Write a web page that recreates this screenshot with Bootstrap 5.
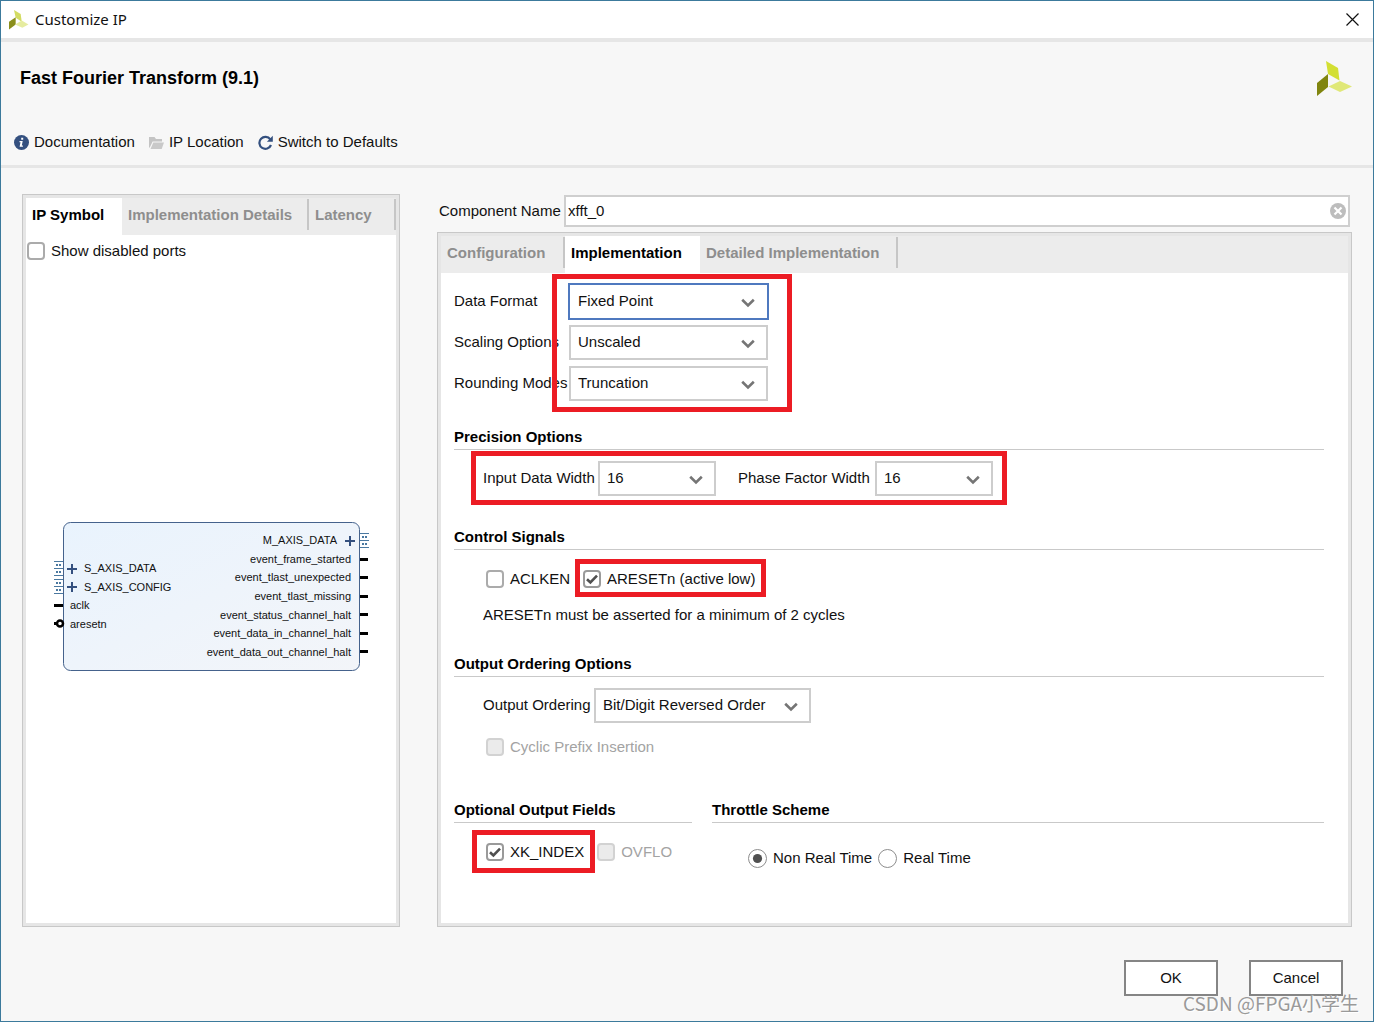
<!DOCTYPE html>
<html lang="en">
<head>
<meta charset="utf-8">
<meta name="viewport" content="width=device-width, initial-scale=1">
<title>Customize IP</title>
<link href="https://cdn.jsdelivr.net/npm/bootstrap@5.3.0/dist/css/bootstrap.min.css" rel="stylesheet">
<style>
:root{--edge:#c8c8c8;--rim:#e6e6e6;--strip:#ececec}
body{font-family:"Liberation Sans",Arial,sans-serif;font-size:15px;line-height:20px;color:#111;background:#f7f7f7}
.dialog-window{min-height:100vh;border:1px solid #3c7a9c}
.title-bar{height:41px;padding:0 14px 0 8px;gap:6px;border-bottom:4px solid var(--rim);font-family:"Noto Sans","Open Sans",sans-serif}
.title-bar span{padding-bottom:2px}
.close-btn{line-height:0}
.dialog-head{padding:19px 21px 13px 13px;border-bottom:3px solid var(--rim)}
.ip-title{font-size:18px;font-weight:700;line-height:24px;padding:0 0 2px 6px;color:#000}
.tool-row{margin-top:36px;gap:14px}
.tool-link{color:#111;text-decoration:none;gap:5px}
.dialog-main{padding:26px 21px 0;gap:37px}
.symbol-pane{flex:0 0 378px}
.pane{border:1px solid var(--edge);box-shadow:inset 0 0 0 3px var(--rim);padding:3px;background:#fff}
.tab-strip{background:var(--strip);border:0;height:37px;flex-wrap:nowrap}
.tab-strip .nav-link{display:flex;align-items:center;justify-content:space-between;height:37px;padding:0 0 4px 6px;border:0;border-radius:0;font-weight:700;color:#8e8e8e;white-space:nowrap}
.tab-strip .nav-link::after{content:"";width:2px;height:31px;background:#c6c6c6}
.tab-strip .nav-link.active{background:#fff;color:#000}
.tab-strip .nav-link.active::after{background:transparent}
.tab-xs{width:87px}.tab-sm{width:96px}.tab-md{width:124px}.tab-lg{width:135px}.tab-xl{width:187px}.tab-xxl{width:198px}
.show-row{padding:6px 1px 10px}
.tick-row{gap:6px}
.form-check-input{width:18px;height:18px;margin:0;border:2px solid #ababab;background-color:#fff;flex:none}
.form-check-input[type=checkbox]{border-radius:4px}
.form-check-input:checked{background-color:#fff;border-color:#9a9a9a}
.form-check-input:checked[type=checkbox]{background-image:url("data:image/svg+xml,%3Csvg xmlns='http://www.w3.org/2000/svg' viewBox='0 0 14 14'%3E%3Cpath fill='none' stroke='%23505050' stroke-width='2.6' d='M2 7.2l3.4 3.3L12 3.6'/%3E%3C/svg%3E")}
.form-check-input[type=radio]{width:19px;height:19px;border-width:1px;border-color:#8d8d8d}
.form-check-input:checked[type=radio]{background-image:url("data:image/svg+xml,%3Csvg xmlns='http://www.w3.org/2000/svg' viewBox='0 0 17 17'%3E%3Ccircle cx='8.5' cy='8.5' r='4.6' fill='%23505050'/%3E%3C/svg%3E")}
.form-check-input:disabled{background-color:#ebebeb;border-color:#d2d2d2;opacity:1}
.form-check-input:disabled~label{color:#a3a3a3;opacity:1}
.name-row{margin:1px 2px 5px 2px}
.name-row .form-control{height:32px;border:2px solid #cfcfcf;border-radius:0;padding:0 30px 2px 2px;font-size:15px;line-height:20px;color:#111}
.clear-btn{right:4px;top:8px;line-height:0}
.form-body{padding:11px 24px 12px 13px}
.form-select{width:199px;height:35px;border:2px solid #cdcdcd;border-radius:0;padding:0 30px 1px 7px;font-size:15px;line-height:20px;color:#111;background-image:url("data:image/svg+xml,%3Csvg xmlns='http://www.w3.org/2000/svg' viewBox='0 0 14 10'%3E%3Cpath fill='none' stroke='%23757575' stroke-width='2.6' d='M1.2 1.8L7 7.4l5.8-5.6'/%3E%3C/svg%3E");background-size:14px 10px;background-position:right 11px top 12px}
.form-select.is-focus{border-color:#4f79bf;box-shadow:0 0 0 1px #4f79bf;border-width:1px;padding:0 31px 1px 8px;background-position:right 12px top 13px}
.format-grid{display:grid;grid-template-columns:115px 199px;row-gap:6px;align-items:center;width:max-content}
.format-grid label,.label-up{padding-bottom:1px;white-space:nowrap}
.lab-order{width:111px}.lab-input{width:115px}.lab-name{width:125px}.lab-phase{width:137px}
.group-head{font-size:15px;font-weight:700;line-height:20px;padding-bottom:2px;margin:0;border-bottom:1px solid #c9c9c9;color:#000}
.indent{padding-left:29px}
.indent-tick{padding-left:32px}
.indent-radio{padding-left:36px;gap:6px}
.tick-group{gap:13px}
.marked{position:relative}
.marked::after{content:"";position:absolute;border:5px solid #ec1c24;pointer-events:none}
.mark-format::after{inset:-10px -24px -11px 98px}
.mark-width::after{inset:-10px -14px -9px -12px}
.mark-reset::after{inset:-10px -11px -8px -8px}
.mark-index::after{inset:-12px -11px -11px -14px}
.mt-a{margin-top:11px}.mt-b{margin-top:31px}.mt-c{margin-top:19px}.mt-d{margin-top:26px}.mt-e{margin-top:14px}.mt-f{margin-top:43px}.mt-g{margin-top:29px}.mt-h{margin-top:25px}
.w-narrow{width:118px}.w-order{width:217px}
.width-pairs{gap:22px}
.bottom-groups{gap:20px}
.fields-col{flex:0 0 238px}
.dialog-foot{padding:33px 30px 25px;gap:31px}
.dialog-foot .btn{width:94px;height:36px;padding:0;border:2px solid #858585;border-radius:0;background:#fff;color:#111;font-size:15px}
.watermark{right:14px;bottom:5px;font:400 19px/26px "Noto Sans CJK SC",sans-serif;color:#9a9a9a;text-shadow:1px 1px 0 #fff}
</style>
<script src="https://cdn.jsdelivr.net/npm/bootstrap@5.3.0/dist/js/bootstrap.bundle.min.js"></script>
</head>
<body>
<div class="dialog-window d-flex flex-column position-relative">
  <header class="title-bar d-flex align-items-center bg-white">
    <svg width="20" height="20" viewBox="0 0 36 36" aria-hidden="true"><path fill="#d3dc62" d="M9 0l12 7 2 14-11-7z"/><path fill="#8b8f1c" d="M0 21l12-8v13L0 35z"/><path fill="#e6eca0" d="M11 26l12-7 12 7-11 6z"/></svg>
    <span>Customize IP</span>
    <button type="button" class="close-btn ms-auto btn p-0 border-0" aria-label="Close"><svg width="13" height="13" viewBox="0 0 13 13"><path d="M.5.5l12 12M12.500.5l-12 12" stroke="#111" stroke-width="1.2"/></svg></button>
  </header>

  <section class="dialog-head">
    <div class="d-flex align-items-center justify-content-between">
      <h1 class="ip-title m-0">Fast Fourier Transform (9.1)</h1>
      <svg width="35" height="35" viewBox="0 0 35 35" aria-hidden="true"><path fill="#d3df33" d="M9 0l12 7 1.500 12.500L11 13z"/><path fill="#80850f" d="M0 22l11-9V26L0 35z"/><path fill="#e0e878" d="M11.500 25.500L23 20l12 5.500L23 31z"/></svg>
    </div>
    <nav class="tool-row d-flex">
      <a class="tool-link d-flex align-items-center" href="#"><svg width="15" height="15" viewBox="0 0 15 15"><circle cx="7.500" cy="7.500" r="7.500" fill="#34507f"/><path d="M7.200 2.700h2v2h-2zM5.500 6h3.200l-.9 4.600h1.100v1.200H5.600l.9-4.600h-1z" fill="#fff"/></svg>Documentation</a>
      <a class="tool-link d-flex align-items-center" href="#"><svg width="15" height="15" viewBox="0 0 15 15"><path d="M0 13V2h5.500l1.500 2h6v2.500H3.600L1 12z" fill="#c4c4c4"/><path d="M4.300 7.500H15L12.700 14H1.500z" fill="#c9c9c9"/></svg>IP Location</a>
      <a class="tool-link d-flex align-items-center" href="#"><svg width="15" height="15" viewBox="0 0 15 15"><path d="M12.300 4.300A6 6 0 1 0 13 10" fill="none" stroke="#34507f" stroke-width="2.200"/><path d="M14.800.8v6H8.900z" fill="#34507f"/></svg>Switch to Defaults</a>
    </nav>
  </section>

  <main class="dialog-main d-flex flex-grow-1">
    <section class="symbol-pane pane d-flex flex-column">
      <div class="tab-strip nav nav-tabs" role="tablist">
        <button class="nav-link tab-sm active" type="button" role="tab">IP Symbol</button>
        <button class="nav-link tab-xl" type="button" role="tab">Implementation Details</button>
        <button class="nav-link tab-xs" type="button" role="tab">Latency</button>
      </div>
      <div class="show-row tick-row d-flex align-items-center">
        <input class="form-check-input" type="checkbox" id="ports"><label for="ports">Show disabled ports</label>
      </div>
      <div class="flex-grow-1 d-flex align-items-center justify-content-center">
        <svg width="316" height="150" viewBox="53 522 316 150" font-family="Liberation Sans, Arial, sans-serif" font-size="11" fill="#111">
          <defs>
            <linearGradient id="body" x2="1" y2="1"><stop stop-color="#e9f3fd"/><stop offset="1" stop-color="#f3f5f9"/></linearGradient>
            <g id="bus"><path d="M0 .5h9M0 14.500h9M0 7.500h9" stroke="#4a78a0" fill="none"/><path d="M2 4h2M5 4h2M2 11h2M5 11h2" stroke="#4a78a0" stroke-width="2"/></g>
            <path id="plus" d="M-5 0H5M0-5V5" stroke="#34507f" stroke-width="2"/>
          </defs>
          <rect x="63.500" y="522.500" width="296" height="148" rx="7" fill="url(#body)" stroke="#45628c"/>
          <use href="#bus" x="54" y="561"/><use href="#bus" x="54" y="579"/><use href="#bus" x="360" y="533"/>
          <use href="#plus" x="72" y="569"/><use href="#plus" x="72" y="587"/><use href="#plus" x="350" y="541"/>
          <path d="M54 605.500h9M360 559.500h8M360 577.500h8M360 596.500h8M360 614.500h8M360 633.500h8M360 651.500h8" stroke="#000" stroke-width="3"/>
          <path d="M54 623.500h3" stroke="#000" stroke-width="3"/><circle cx="60" cy="623.500" r="3" fill="#fff" stroke="#000" stroke-width="2.500"/>
          <text x="84" y="572">S_AXIS_DATA</text><text x="84" y="591">S_AXIS_CONFIG</text>
          <text x="70" y="609">aclk</text><text x="70" y="628">aresetn</text>
          <g text-anchor="end"><text x="337" y="544">M_AXIS_DATA</text><text x="351" y="563">event_frame_started</text><text x="351" y="581">event_tlast_unexpected</text><text x="351" y="600">event_tlast_missing</text><text x="351" y="619">event_status_channel_halt</text><text x="351" y="637">event_data_in_channel_halt</text><text x="351" y="656">event_data_out_channel_halt</text></g>
        </svg>
      </div>
    </section>

    <section class="d-flex flex-column flex-grow-1">
      <div class="name-row d-flex align-items-center">
        <label for="cname" class="label-up lab-name">Component Name</label>
        <div class="position-relative flex-grow-1">
          <input class="form-control" id="cname" value="xfft_0">
          <button type="button" class="clear-btn btn p-0 border-0 position-absolute" aria-label="Clear"><svg width="16" height="16" viewBox="0 0 16 16"><circle cx="8" cy="8" r="8" fill="#bdbdbd"/><path d="M4.500 4.500l7 7m0-7l-7 7" stroke="#fff" stroke-width="2.200"/></svg></button>
        </div>
      </div>
      <div class="pane flex-grow-1">
        <div class="tab-strip nav nav-tabs" role="tablist">
          <button class="nav-link tab-md" type="button" role="tab">Configuration</button>
          <button class="nav-link tab-lg active" type="button" role="tab">Implementation</button>
          <button class="nav-link tab-xxl" type="button" role="tab">Detailed Implementation</button>
        </div>
        <form class="form-body">
          <div class="format-grid marked mark-format">
            <label for="fmt">Data Format</label><select class="form-select is-focus" id="fmt"><option>Fixed Point</option></select>
            <label for="scale">Scaling Options</label><select class="form-select" id="scale"><option>Unscaled</option></select>
            <label for="round">Rounding Modes</label><select class="form-select" id="round"><option>Truncation</option></select>
          </div>

          <h2 class="group-head mt-d">Precision Options</h2>
          <div class="indent mt-a d-flex">
            <div class="marked mark-width width-pairs d-flex">
              <div class="d-flex align-items-center"><label for="inw" class="label-up lab-input">Input Data Width</label><select class="form-select w-narrow" id="inw"><option>16</option></select></div>
              <div class="d-flex align-items-center"><label for="phw" class="label-up lab-phase">Phase Factor Width</label><select class="form-select w-narrow" id="phw"><option>16</option></select></div>
            </div>
          </div>

          <h2 class="group-head mt-b">Control Signals</h2>
          <div class="indent-tick tick-group mt-c d-flex">
            <div class="tick-row d-flex align-items-center"><input class="form-check-input" type="checkbox" id="aclken"><label for="aclken">ACLKEN</label></div>
            <div class="tick-row d-flex align-items-center marked mark-reset"><input class="form-check-input" type="checkbox" id="areset" checked><label for="areset">ARESETn (active low)</label></div>
          </div>
          <p class="indent mb-0 mt-3">ARESETn must be asserted for a minimum of 2 cycles</p>

          <h2 class="group-head mt-g">Output Ordering Options</h2>
          <div class="indent mt-a d-flex align-items-center">
            <label for="order" class="label-up lab-order">Output Ordering</label><select class="form-select w-order" id="order"><option>Bit/Digit Reversed Order</option></select>
          </div>
          <div class="indent-tick tick-row d-flex align-items-center mt-e"><input class="form-check-input" type="checkbox" id="cyclic" disabled><label for="cyclic">Cyclic Prefix Insertion</label></div>

          <div class="bottom-groups d-flex mt-f">
            <div class="fields-col">
              <h2 class="group-head">Optional Output Fields</h2>
              <div class="indent-tick tick-group mt-c d-flex">
                <div class="tick-row d-flex align-items-center marked mark-index"><input class="form-check-input" type="checkbox" id="xk" checked><label for="xk">XK_INDEX</label></div>
                <div class="tick-row d-flex align-items-center"><input class="form-check-input" type="checkbox" id="ovflo" disabled><label for="ovflo">OVFLO</label></div>
              </div>
            </div>
            <div class="flex-grow-1">
              <h2 class="group-head">Throttle Scheme</h2>
              <div class="mt-h d-flex indent-radio">
                <div class="tick-row d-flex align-items-center"><input class="form-check-input" type="radio" name="thr" id="nrt" checked><label for="nrt">Non Real Time</label></div>
                <div class="tick-row d-flex align-items-center"><input class="form-check-input" type="radio" name="thr" id="rt"><label for="rt">Real Time</label></div>
              </div>
            </div>
          </div>
        </form>
      </div>
    </section>
  </main>

  <footer class="dialog-foot d-flex justify-content-end">
    <button type="button" class="btn">OK</button>
    <button type="button" class="btn">Cancel</button>
  </footer>
  <div class="watermark position-absolute">CSDN @FPGA小学生</div>
</div>
</body>
</html>
